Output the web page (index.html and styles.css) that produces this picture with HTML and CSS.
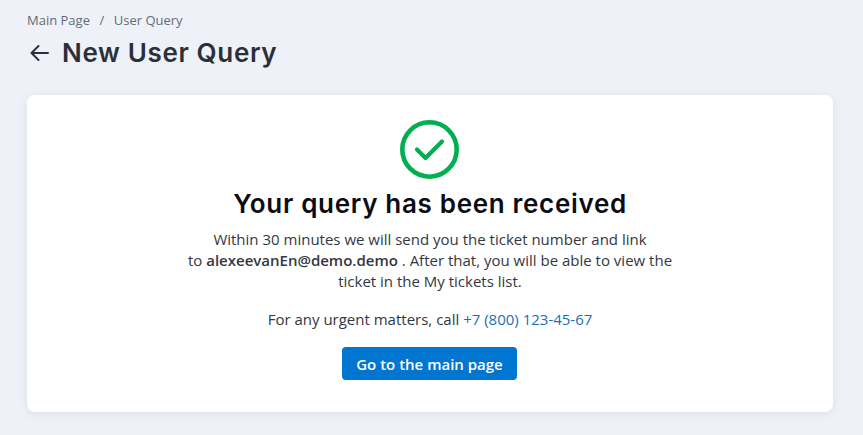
FILE: index.html
```html
<!DOCTYPE html>
<html lang="en">
<head>
<meta charset="utf-8">
<title>New User Query</title>
<link rel="stylesheet" href="styles.css">
</head>
<body>
<main class="page">
  <nav class="crumbs"><a>Main Page</a><span class="sep">/</span><a>User Query</a></nav>
  <header class="head">
    <svg class="back" width="24" height="24" viewBox="0 0 24 24" fill="none" stroke="#2b2f38" stroke-width="2" stroke-linecap="round" stroke-linejoin="round"><path d="M20 12H4M10.500 5L3.500 12l7 7"/></svg>
    <h1>New User Query</h1>
  </header>
  <section class="card">
    <svg class="ok" width="60" height="60" viewBox="0 0 60 60" fill="none" stroke="#00b050" stroke-linecap="round" stroke-linejoin="round"><circle cx="29.500" cy="29.500" r="27.200" stroke-width="4.600"/><path d="M17 29.500l8.500 8.500L42 21.500" stroke-width="4.200"/></svg>
    <h2>Your query has been received</h2>
    <p class="msg">Within 30 minutes we will send you the ticket number and link to&nbsp;<b>alexeevanEn@demo.demo</b> . After that, you will be able to view the ticket in the My tickets list.</p>
    <p class="call">For any urgent matters, call <a>+7 (800) 123-45-67</a></p>
    <button class="main-btn">Go to the main page</button>
  </section>
</main>
</body>
</html>
```
FILE: styles.css
```css
* { box-sizing: border-box; }
html, body { margin: 0; height: 100%; }
body { background: #eef2f8; font-family: "Open Sans", sans-serif; color: #33373f; }
.page { padding: 12px 30px 0 27px; }
.crumbs { display: flex; gap: 9.500px; font-size: 13px; line-height: 16px; color: #646b76; }
.head { display: flex; align-items: center; gap: 10px; margin-top: 8px; margin-left: 1px; height: 34px; }
.back { flex: none; }
h1 { margin: 0; font-family: Inter, sans-serif; font-weight: 600; font-size: 26px; letter-spacing: .65px; line-height: 34px; color: #2b2f38; }
.card { margin-top: 25px; height: 317px; background: #fff; border-radius: 8px; box-shadow: 0 2px 8px rgba(40, 60, 90, .1); display: flex; flex-direction: column; align-items: center; padding-top: 25px; }
h2 { margin: 6px 0 0; font-family: Inter, sans-serif; font-weight: 600; font-size: 26px; letter-spacing: .68px; line-height: 36px; color: #0b0d12; }
.msg { margin: 7px 0 0; width: 500px; text-align: center; font-size: 15px; line-height: 21px; }
.msg b { font-weight: 600; }
.call { margin: 17px 0 0; font-size: 15px; line-height: 21px; }
.call a { color: #1a6fb5; }
.main-btn { margin: 17px 1px 0 0; width: 175px; height: 33px; border: 0; border-radius: 4px; background: #0076d1; color: #fff; font: 600 15px/20px "Open Sans", sans-serif; }
```
